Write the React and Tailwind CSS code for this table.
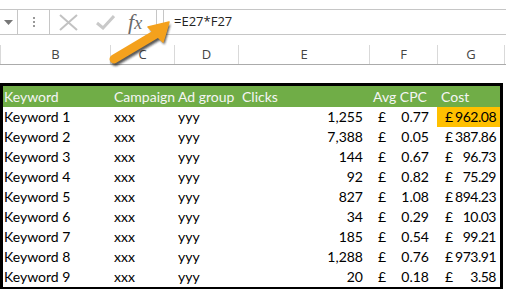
import React from 'react'

const rows = [
  ['Keyword 1', '1,255', '0.77', '962.08'],
  ['Keyword 2', '7,388', '0.05', '387.86'],
  ['Keyword 3', '144', '0.67', '96.73'],
  ['Keyword 4', '92', '0.82', '75.29'],
  ['Keyword 5', '827', '1.08', '894.23'],
  ['Keyword 6', '34', '0.29', '10.03'],
  ['Keyword 7', '185', '0.54', '99.21'],
  ['Keyword 8', '1,288', '0.76', '973.91'],
  ['Keyword 9', '20', '0.18', '3.58'],
]

const cols = 'grid grid-cols-[108px_64px_64px_131px_67px_63px]'

function FormulaBar() {
  return (
    <div className="flex h-[26px] mt-[9px] font-['Open_Sans',sans-serif]">
      <div className="w-[18px] border-y border-r border-[#c6c6c6] flex items-center justify-center">
        <svg width="9" height="5" viewBox="0 0 9 5"><path d="M0 0h9L4.5 5z" fill="#777" /></svg>
      </div>
      <div className="w-[31px] border-y border-[#c6c6c6] flex items-center justify-center">
        <div className="flex flex-col gap-[2px]">
          <span className="w-[2px] h-[2px] bg-[#999]" />
          <span className="w-[2px] h-[2px] bg-[#999]" />
          <span className="w-[2px] h-[2px] bg-[#999]" />
        </div>
      </div>
      <div className="w-[108px] border border-[#c6c6c6] flex items-center">
        <svg className="ml-[9px]" width="19" height="17" viewBox="0 0 19 17">
          <path d="M1 1l17 15M18 1L1 16" stroke="#c2c2c2" strokeWidth="2" fill="none" />
        </svg>
        <svg className="ml-[18px]" width="19" height="15" viewBox="0 0 19 15">
          <path d="M1 8l6 5L18 1" stroke="#c9c9c9" strokeWidth="3" fill="none" />
        </svg>
        <span className="ml-[13px] font-['Liberation_Serif',serif] italic text-[22px] leading-none text-[#6a6a6a]">
          f<span className="text-[18px]">x</span>
        </span>
      </div>
      <div className="w-[6px] border-y border-[#c6c6c6]" />
      <div className="flex-1 border-y border-l border-[#c6c6c6] flex items-center pl-[10px] text-[13px] text-[#222]">
        =E27*F27
      </div>
    </div>
  )
}

function ColumnHeaders() {
  const letters = [
    ['', 'w-[1px]'],
    ['B', 'w-[110px]'],
    ['C', 'w-[64px]'],
    ['D', 'w-[64px]'],
    ['E', 'w-[131px]'],
    ['F', 'w-[68px]'],
    ['G', 'w-[67px]'],
  ]
  return (
    <div className="flex h-[20px] mt-[10px] border-b border-[#ababab] font-['Open_Sans',sans-serif] text-[13px] text-[#444]">
      {letters.map(([l, w], i) => (
        <div key={i} className={`${w} border-r border-[#d9d9d9] flex items-center justify-center`}>
          {l}
        </div>
      ))}
    </div>
  )
}

function Arrow() {
  return (
    <svg className="absolute left-0 top-0" width="506" height="100" viewBox="0 0 506 100">
      <defs>
        <filter id="sh" x="-20%" y="-20%" width="140%" height="140%">
          <feGaussianBlur stdDeviation="1" />
        </filter>
      </defs>
      <g transform="translate(1.5 2.5)" filter="url(#sh)" opacity="0.75">
        <path d="M114 59L156 34" stroke="#222" strokeWidth="9" strokeLinecap="round" />
        <path d="M169 22L148 27L163 42Z" fill="#222" />
      </g>
      <path d="M114 59L156 34" stroke="#f4a11d" strokeWidth="9" strokeLinecap="round" />
      <path d="M169 22L148 27L163 42Z" fill="#f4a11d" stroke="#f4a11d" strokeWidth="1.5" strokeLinejoin="round" />
    </svg>
  )
}

export default function App() {
  return (
    <div className="relative w-[506px] h-[289px] bg-white overflow-hidden">
      <FormulaBar />
      <ColumnHeaders />

      <div className="mt-[18px] w-[503px] border-[3px] border-black font-['Lato',sans-serif] text-[14px]">
        <div className={`${cols} h-[21px] leading-[21px] bg-[#70ad47] text-[#f5f5f5]`}>
          <div className="pl-[1px]">Keyword</div>
          <div className="pl-[3px]">Campaign</div>
          <div className="pl-[3px]">Ad group</div>
          <div className="pl-[3px]">Clicks</div>
          <div className="pl-[3px]">Avg CPC</div>
          <div className="pl-[4px]">Cost</div>
        </div>
        {rows.map(([k, clicks, cpc, cost], i) => (
          <div key={k} className={`${cols} h-[20px] leading-[20px] text-black`}>
            <div className="pl-[1px]">{k}</div>
            <div className="pl-[3px]">xxx</div>
            <div className="pl-[3px]">yyy</div>
            <div className="text-right pr-[7px]">{clicks}</div>
            <div className="flex justify-between pl-[8px] pr-[8px]">
              <span>£</span>
              <span>{cpc}</span>
            </div>
            <div className={`flex justify-between pl-[8px] pr-[4px] ${i === 0 ? 'bg-[#ffc000]' : ''}`}>
              <span>£</span>
              <span className="tracking-[-0.5px]">{cost}</span>
            </div>
          </div>
        ))}
      </div>

      <Arrow />
    </div>
  )
}
